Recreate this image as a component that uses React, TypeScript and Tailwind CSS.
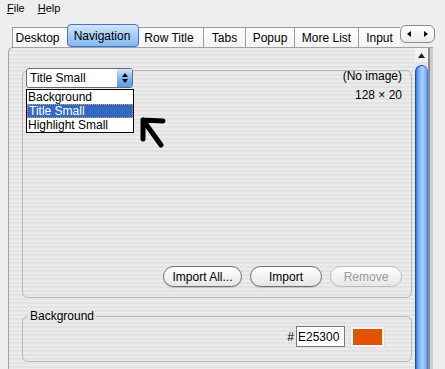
import React from "react";

function Tab({ label, className }: { label: string; className: string }) {
  return (
    <div
      className={`h-[20px] flex items-center justify-center border-t border-[#9c9c9c] bg-[linear-gradient(#ffffff,#f4f4f4)] ${className}`}
    >
      {label}
    </div>
  );
}

function PillButton({
  label,
  className,
  disabled,
}: {
  label: string;
  className: string;
  disabled?: boolean;
}) {
  return (
    <div
      className={`h-[21px] rounded-full flex items-center justify-center bg-[linear-gradient(#ffffff,#f1f1f1_60%,#e4e4e4)] ${
        disabled
          ? "border border-[#bdbdbd] text-[#9a9a9a]"
          : "border border-[#6e6e6e] text-black shadow-[0_1px_1px_rgba(0,0,0,0.15)]"
      } ${className}`}
    >
      {label}
    </div>
  );
}

export default function App() {
  return (
    <div className="relative w-[445px] h-[369px] overflow-hidden bg-[#eeeeee] font-['Liberation_Sans',Arial,sans-serif] text-[12px] leading-[14px] text-black">
      {/* Menu bar */}
      <div className="h-[16px] flex items-center pl-[7px] gap-[13px] text-[11px]">
        <span>
          <span className="underline">F</span>ile
        </span>
        <span>
          <span className="underline">H</span>elp
        </span>
      </div>

      {/* Tab strip */}
      <div className="mt-[8px] h-[23px] flex items-end pl-[12px]">
        <Tab label="Desktop" className="w-[55px] border-l pr-[5px]" />
        <div className="h-[23px] w-[72px] rounded-[4px] border border-[#3b76d4] bg-[linear-gradient(#d3e6fc,#a6cdf6_50%,#86b9f0)] flex items-center justify-center pr-[2px] relative z-10">
          Navigation
        </div>
        <Tab label="Row Title" className="w-[64px] pr-[4px]" />
        <Tab label="Tabs" className="w-[42px] border-l" />
        <Tab label="Popup" className="w-[49px] border-l" />
        <Tab label="More List" className="w-[64px] border-l" />
        <Tab label="Input" className="w-[42px] border-l" />
        <div className="self-start mt-[1px] w-[35px] h-[18px] rounded-[6px] border border-[#8a8a8a] bg-[linear-gradient(#ffffff,#ececec)] flex items-center justify-between px-[6px]">
          <svg width="4" height="6" viewBox="0 0 4 6">
            <path d="M4 0 L0 3 L4 6 Z" fill="#000" />
          </svg>
          <svg width="4" height="6" viewBox="0 0 4 6">
            <path d="M0 0 L4 3 L0 6 Z" fill="#000" />
          </svg>
        </div>
      </div>

      {/* Panel */}
      <div className="flex h-[322px]">
        <div className="w-[8px]" />
        <div className="w-[425px] flex border-t border-l border-[#a3a3a3] rounded-tl-[5px] bg-[repeating-linear-gradient(180deg,#ebebeb_0px,#ebebeb_2px,#e3e3e3_2px,#e3e3e3_4px)]">
          {/* Content */}
          <div className="w-[406px] flex flex-col pl-[13px] pt-[22px]">
            {/* Group 1 */}
            <div className="w-[390px] h-[228px] rounded-[6px] border border-[#b6b6b6] flex flex-col">
              <div className="flex justify-between pl-[3px] pr-[9px] mt-[-3px]">
                <div className="relative">
                  <div className="w-[107px] h-[20px] rounded-[3px] border border-[#6c6c6c] bg-white flex items-center">
                    <span className="pl-[3px] flex-1">Title Small</span>
                    <div className="w-[15px] h-[18px] rounded-r-[2px] bg-[linear-gradient(#cfe4fc,#7fb3ef_55%,#5b9be8)] flex flex-col items-center justify-center gap-[2px]">
                      <svg width="6" height="4" viewBox="0 0 6 4">
                        <path d="M0 4 L3 0 L6 4 Z" fill="#000" />
                      </svg>
                      <svg width="6" height="4" viewBox="0 0 6 4">
                        <path d="M0 0 L3 4 L6 0 Z" fill="#000" />
                      </svg>
                    </div>
                  </div>
                  {/* Popup list */}
                  <div className="absolute left-0 top-[21px] z-20 w-[108px] border border-black bg-white flex flex-col">
                    <div className="h-[14px] pl-[1px] flex items-center">Background</div>
                    <div className="h-[14px] pl-[1px] flex items-center bg-[#316ac5] text-white border border-dotted border-[#e8a33c]">
                      Title Small
                    </div>
                    <div className="h-[14px] pl-[1px] flex items-center">Highlight Small</div>
                  </div>
                </div>
                <div className="flex flex-col items-end gap-[5px] pt-[1px]">
                  <span>(No image)</span>
                  <span>128 × 20</span>
                </div>
              </div>
              <div className="mt-auto flex justify-end gap-[8px] pr-[9px] pb-[10px]">
                <PillButton label="Import All..." className="w-[79px]" />
                <PillButton label="Import" className="w-[72px]" />
                <PillButton label="Remove" className="w-[72px]" disabled />
              </div>
            </div>

            {/* Group 2 */}
            <fieldset className="mt-[11px] w-[390px] h-[53px] rounded-[6px] border border-[#b6b6b6]">
              <legend className="ml-[5px] px-[2px]">Background</legend>
              <div className="flex justify-end items-center pt-[3px] pr-[27px]">
                <span className="mr-[2px]">#</span>
                <div className="w-[49px] h-[21px] border border-[#7a7a7a] bg-white flex items-center pl-[1px]">
                  E25300
                </div>
                <div className="ml-[6px] w-[33px] h-[20px] border-2 border-[#f7f7f7] bg-[#e25300] shadow-[0_0_0_1px_#dcdcdc]" />
              </div>
            </fieldset>
          </div>

          {/* Scrollbar */}
          <div className="w-[13px] flex flex-col">
            <div className="h-[14px] bg-[#f2f2f2] flex items-center justify-center">
              <svg width="7" height="5" viewBox="0 0 7 5">
                <path d="M0 5 L3.5 0 L7 5 Z" fill="#222" />
              </svg>
            </div>
            <div className="h-[3px] bg-[#e4e4e4]" />
            <div className="flex-1 rounded-t-[7px] border-l border-t border-[#1d49c2] bg-[linear-gradient(90deg,#3a72dc_0%,#6ca6ee_20%,#a9d1fa_50%,#93c4f6_70%,#5e98e8_92%,#2f5fcc_100%)]" />
          </div>
          <div className="w-[2px] bg-[#8e8e8e]" />
          <div className="w-[3px] bg-[#cdcdcd]" />
        </div>
      </div>

      {/* Annotation arrow */}
      <svg
        className="absolute left-0 top-0 pointer-events-none z-30"
        width="445"
        height="369"
        viewBox="0 0 445 369"
      >
        <path
          d="M163 121 L143 120 L143 139 M143 120 L161 145"
          stroke="#000"
          strokeWidth="5"
          strokeLinecap="round"
          strokeLinejoin="round"
          fill="none"
        />
      </svg>
    </div>
  );
}
